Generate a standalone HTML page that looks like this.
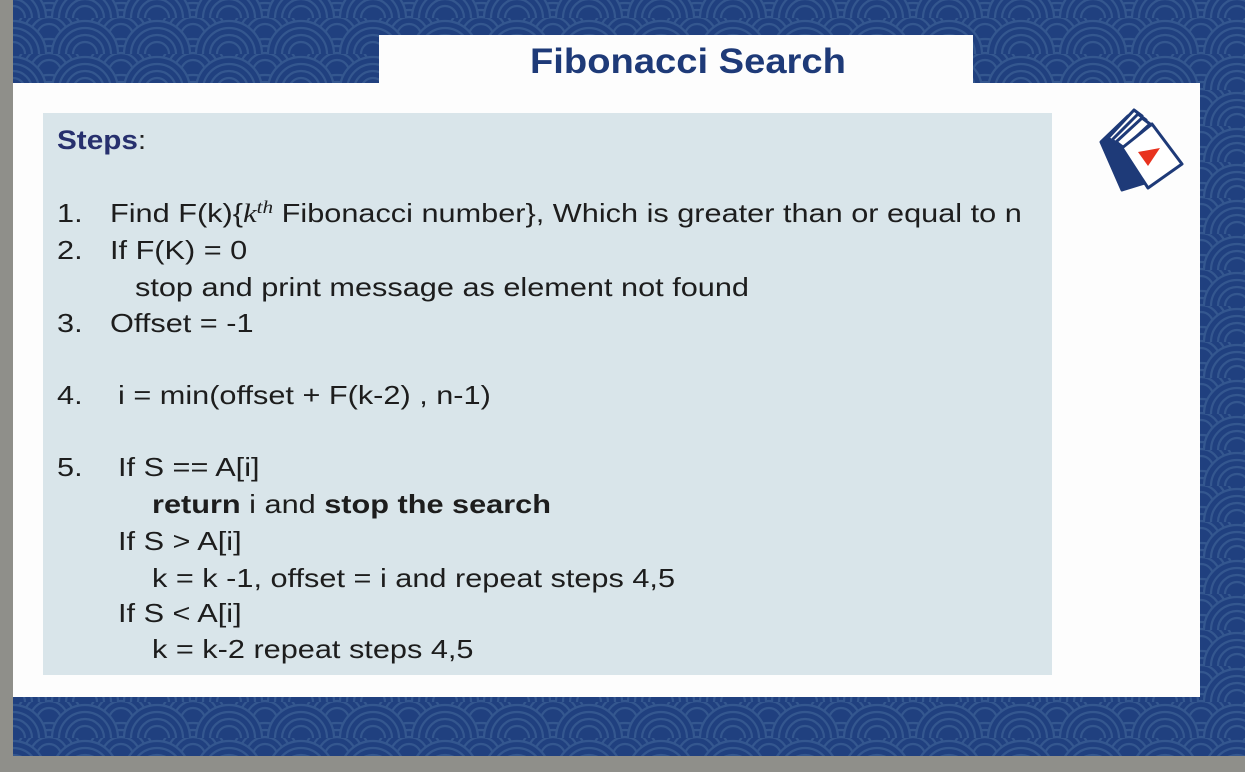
<!DOCTYPE html>
<html><head><style>
html,body{margin:0;padding:0;}
body{width:1245px;height:772px;position:relative;overflow:hidden;background:#8f8f8a;font-family:"Liberation Sans",sans-serif;}
.bg{position:absolute;left:13px;top:0;width:1232px;height:756px;}
.panel{position:absolute;left:13px;top:83px;width:1187px;height:614px;background:#fdfdfd;}
.tab{position:absolute;left:379px;top:35px;width:594px;height:50px;background:#fdfdfd;}
.title{position:absolute;left:530px;top:41px;font-weight:bold;font-size:35px;color:#1e3a78;line-height:42px;transform:scaleX(1.09);transform-origin:left;white-space:nowrap;}
.box{position:absolute;left:43px;top:113px;width:1009px;height:562px;background:#d9e5ea;}
.l{position:absolute;font-size:26px;color:#1d1d1d;line-height:30px;white-space:nowrap;transform:scaleX(1.18);transform-origin:left;}
.steps{position:absolute;left:57px;top:124px;font-size:27px;font-weight:bold;color:#27306e;line-height:32px;transform:scaleX(1.1);transform-origin:left;}
</style></head><body>
<svg class="bg" width="1232" height="756">
<defs>
<pattern id="p" width="72" height="36" patternUnits="userSpaceOnUse">
<rect width="72" height="36" fill="#20407f"/>
<g fill="none" stroke="#34578f" stroke-width="2.2">
<circle cx="36" cy="36" r="33"/><circle cx="36" cy="36" r="26"/><circle cx="36" cy="36" r="19"/><circle cx="36" cy="36" r="12"/>
</g>
</pattern>
<pattern id="p2" width="72" height="36" patternUnits="userSpaceOnUse" x="36" y="18">
<g fill="#20407f" stroke="#34578f" stroke-width="2.2">
<circle cx="36" cy="36" r="34" stroke="none"/>
<circle cx="36" cy="36" r="33" fill="none"/><circle cx="36" cy="36" r="26" fill="none"/><circle cx="36" cy="36" r="19" fill="none"/><circle cx="36" cy="36" r="12" fill="none"/>
</g>
</pattern>
</defs>
<rect width="1232" height="756" fill="url(#p)"/>
<rect width="1232" height="756" fill="url(#p2)"/>
</svg>
<div class="panel"></div>
<div class="tab"></div>
<div class="title">Fibonacci Search</div>
<svg style="position:absolute;left:1098px;top:104px" width="86" height="90" viewBox="0 0 86 90">
<g stroke="#1e3a78" stroke-width="3" stroke-linejoin="round">
<path d="M3 38 L30 12 L50 78 L24 86 Z" fill="#1e3a78"/>
<path d="M10 34 L36 6 L44 12 L18 40 Z" fill="#fff"/>
<path d="M14 36 L40 10 L48 16 L22 42 Z" fill="#fff"/>
<path d="M18 38 L44 14 L52 20 L26 44 Z" fill="#fff"/>
<path d="M24 44 L54 20 L84 60 L50 84 Z" fill="#fff"/>
</g>
<path d="M40 48 L62 44 L50 62 Z" fill="#e8321e"/>
</svg>
<div class="box"></div>
<div class="steps">Steps<span style="font-weight:normal;color:#222">:</span></div>
<div class="l" style="left:57px;top:198px">1.</div><div class="l" style="left:110px;top:198px">Find F(k){<i style="font-family:'Liberation Serif',serif">k<sup style="font-size:18px;vertical-align:9px;line-height:0">th</sup></i> Fibonacci number}, Which is greater than or equal to n</div>
<div class="l" style="left:57px;top:235px">2.</div><div class="l" style="left:110px;top:235px">If F(K) = 0</div>
<div class="l" style="left:135px;top:272px">stop and print message as element not found</div>
<div class="l" style="left:57px;top:308px">3.</div><div class="l" style="left:110px;top:308px">Offset = -1</div>
<div class="l" style="left:57px;top:380px">4.</div><div class="l" style="left:118px;top:380px">i = min(offset + F(k-2) , n-1)</div>
<div class="l" style="left:57px;top:452px">5.</div><div class="l" style="left:118px;top:452px">If S == A[i]</div>
<div class="l" style="left:152px;top:489px"><b>return</b> i and <b>stop the search</b></div>
<div class="l" style="left:118px;top:526px">If S &gt; A[i]</div>
<div class="l" style="left:152px;top:563px">k = k -1, offset = i and repeat steps 4,5</div>
<div class="l" style="left:118px;top:598px">If S &lt; A[i]</div>
<div class="l" style="left:152px;top:634px">k = k-2 repeat steps 4,5</div>
</body></html>
